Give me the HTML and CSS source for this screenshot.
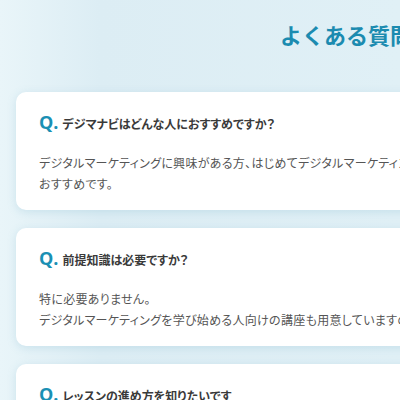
FILE: index.html
```html
<!DOCTYPE html>
<html lang="ja">
<head>
<meta charset="utf-8">
<title>よくある質問</title>
<link rel="stylesheet" href="styles.css">
</head>
<body>
<main class="faq">
  <h1 class="faq-title">よくある質問</h1>
  <div class="faq-list">
    <section class="faq-card">
      <h2 class="faq-q"><span class="q-mark">Q.</span>デジマナビはどんな人におすすめですか？</h2>
      <p class="faq-a">デジタルマーケティングに興味がある方、はじめてデジタルマーケティングを学ぶ方に<br>おすすめです。</p>
    </section>
    <section class="faq-card">
      <h2 class="faq-q"><span class="q-mark">Q.</span>前提知識は必要ですか？</h2>
      <p class="faq-a">特に必要ありません。<br>デジタルマーケティングを学び始める人向けの講座も用意していますので、ご安心ください。</p>
    </section>
    <section class="faq-card">
      <h2 class="faq-q"><span class="q-mark">Q.</span>レッスンの進め方を知りたいです</h2>
      <p class="faq-a">動画を見ながら、自分のペースで学習を進めることができます。</p>
    </section>
  </div>
</main>
</body>
</html>
```
FILE: styles.css
```css
html, body {
  margin: 0;
  padding: 0;
  overflow: hidden;
}
body {
  background: linear-gradient(90deg, #e9f5f9 0%, #dcedf4 25%, #e0f0f6 100%);
  font-family: "Noto Sans CJK JP", "Noto Sans", sans-serif;
  color: #333;
}
.faq {
  width: 692px;
  padding: 16px 16px 40px;
  box-sizing: border-box;
}
.faq-title {
  margin: 0;
  text-align: center;
  font-size: 22px;
  font-weight: 700;
  line-height: 36px;
  color: #1b8bb0;
}
.faq-list {
  margin-top: 40px;
  display: flex;
  flex-direction: column;
  gap: 18px;
}
.faq-card {
  background: #fff;
  border-radius: 10px;
  box-shadow: 0 2px 8px rgba(120, 180, 205, 0.25);
  padding: 18px 23px 16px;
}
.faq-q {
  margin: 0;
  font-size: 12px;
  font-weight: 700;
  line-height: 28px;
  color: #3a3a3a;
  font-feature-settings: "palt";
}
.q-mark {
  font-family: "Open Sans", "Noto Sans", sans-serif;
  font-size: 18px;
  line-height: 1;
  font-weight: 700;
  color: #1a90b4;
  margin-right: 4px;
}
.faq-a {
  margin: 14px 0 0;
  font-size: 12px;
  line-height: 21px;
  color: #555;
  font-feature-settings: "palt";
  letter-spacing: 0.3px;
  white-space: nowrap;
}
```
